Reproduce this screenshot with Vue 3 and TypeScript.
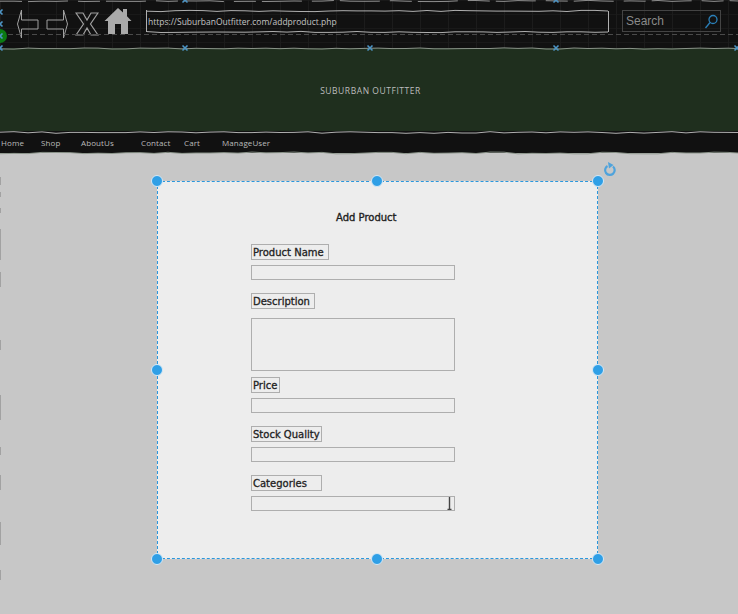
<script setup lang="ts">
import { computed } from 'vue'

const fields = [
  { label: 'Product Name', width: 78, kind: 'input' },
  { label: 'Description', width: 64, kind: 'textarea' },
  { label: 'Price', width: 29, kind: 'input' },
  { label: 'Stock Quality', width: 71, kind: 'input' },
  { label: 'Categories', width: 71, kind: 'select' }
]

const navItems = [
  { label: 'Home', width: 40 },
  { label: 'Shop', width: 40 },
  { label: 'AboutUs', width: 60 },
  { label: 'Contact', width: 43 },
  { label: 'Cart', width: 38 },
  { label: 'ManageUser', width: 70 }
]

// selection handles round the card
const handles = [
  { x: 0, y: 0 }, { x: 49.9, y: 0 }, { x: 100, y: 0 },
  { x: 0, y: 50 }, { x: 100, y: 50 },
  { x: 0, y: 100 }, { x: 49.9, y: 100 }, { x: 100, y: 100 }
]

const headerMarks = [
  [185, 0], [556, 0], [0, 12], [0, 24], [0, 36],
  [0, 48], [185, 48], [370, 48], [556, 48], [737, 48]
]

const markPath = computed(() =>
  headerMarks.map(([x, y]) => `M${x - 2.5} ${y - 2.5} L${x + 2.5} ${y + 2.5} M${x + 2.5} ${y - 2.5} L${x - 2.5} ${y + 2.5}`).join(' ')
)

// hand-drawn looking line: small seeded wobble
const wobble = (x0: number, x1: number, y: number, amp: number, seed: number) => {
  let s = seed
  const pts: string[] = []
  for (let x = x0; x < x1; x += 14) {
    s = (s * 9301 + 49297) % 233280
    pts.push(`${x},${(y + (s / 233280 - 0.5) * amp * 2).toFixed(1)}`)
  }
  pts.push(`${x1},${y}`)
  return `M${pts.join(' L')}`
}

const urlTop = computed(() => wobble(147, 608, 11, 0.7, 11))
const urlBottom = computed(() => wobble(147, 608, 32, 0.6, 23))
const topEdge = computed(() => wobble(0, 738, 1, 0.6, 37))
const bannerTop = computed(() => wobble(0, 738, 48.5, 0.6, 41))
const bannerBottom = computed(() => wobble(0, 738, 132.5, 0.8, 53))
const navBottom = computed(() => wobble(0, 738, 153, 0.9, 67))
</script>

<template>
  <div class="page">
    <header class="toolbar">
      <div class="icons">
        <svg width="23" height="30" viewBox="0 0 23 30" class="arrow">
          <path d="M4.500 1 L0.500 15 L4.500 29 L4.500 20 L21 20 L21 11 L4.500 11 Z" />
        </svg>
        <svg width="23" height="30" viewBox="0 0 23 30" class="arrow right-arrow">
          <path d="M18.500 1 L22.500 15 L18.500 29 L18.500 20 L2 20 L2 11 L18.500 11 Z" />
        </svg>
        <svg width="24" height="24" viewBox="0 0 24 24" class="cross">
          <path d="M1 1 H8 L12 8 L16 1 H23 L15.500 12 L23 23 H16 L12 16 L8 23 H1 L8.500 12 Z" />
        </svg>
        <svg width="28" height="28" viewBox="0 0 28 28" class="home">
          <path d="M14 1 L19 5.500 V2 H23 V9.200 L27.500 14 H24 V27 H17 V17 H11 V27 H4 V14 H0.500 Z" />
        </svg>
      </div>
      <div class="url">https://SuburbanOutfitter.com/addproduct.php</div>
      <div class="search">
        <span>Search</span>
        <svg width="14" height="15" viewBox="0 0 14 15">
          <circle cx="9" cy="5.500" r="4" />
          <path d="M6 8.500 L1.500 14" />
        </svg>
      </div>
    </header>

    <section class="banner">SUBURBAN OUTFITTER</section>

    <nav class="nav">
      <a v-for="item in navItems" :key="item.label" :style="{ width: `${item.width}px` }">{{ item.label }}</a>
    </nav>

    <main class="canvas">
      <div class="card">
        <h1 class="title">Add Product</h1>
        <form class="form" @submit.prevent>
          <div v-for="field in fields" :key="field.label" class="field" :class="`field-${field.kind}`">
            <label :style="{ width: `${field.width}px` }">{{ field.label }}</label>
            <textarea v-if="field.kind === 'textarea'" />
            <div v-else-if="field.kind === 'select'" class="select-wrap">
              <select />
              <svg width="7" height="13" viewBox="0 0 7 13">
                <path d="M3.500 0 V12.500 M1.500 12.500 H5.500" />
              </svg>
            </div>
            <input v-else type="text" />
          </div>
        </form>

        <div class="handles">
          <span
            v-for="h in handles"
            :key="`${h.x}-${h.y}`"
            class="handle"
            :style="{ left: `${h.x}%`, top: `${h.y}%` }"
          />
        </div>
        <svg class="rotate" width="14" height="16" viewBox="0 0 14 16">
          <path d="M4.500 4 A4.800 4.800 0 1 0 10 4.500" />
          <path class="tip" d="M5 0 L10.500 3 L6 6.500 Z" />
        </svg>
      </div>
    </main>

    <!-- sketchy lines and artboard marks over the page -->
    <svg class="sketch" width="738" height="614" viewBox="0 0 738 614">
      <path :d="topEdge" class="line dashed" />
      <path :d="urlTop" class="line" />
      <path :d="urlBottom" class="line" />
      <path d="M146.500 10 V32 M608.500 11 V32" class="line" />
      <path :d="bannerTop" class="line soft" />
      <path :d="bannerBottom" class="line" />
      <path :d="navBottom" class="line soft" />
      <path d="M0 34.500 H738" class="guide" />
      <path
        d="M0 177 V185 M0 192 V197 M0 208 V213 M0 229 V260 M0 272 V287 M0 340 V350 M0 395 V420 M0 447 V455 M0 475 V490 M0 522 V545 M0 570 V580"
        class="edge"
      />
      <circle cx="0" cy="36" r="7" class="green-dot" />
      <path :d="markPath" class="marks" />
    </svg>
  </div>
</template>

<style>
html,
body {
  margin: 0;
  background: #c7c7c7;
}
</style>

<style scoped>
.page {
  position: relative;
  width: 738px;
  height: 614px;
  overflow: hidden;
  display: flex;
  flex-direction: column;
  background: #c7c7c7;
  font-family: "DejaVu Sans", sans-serif;
}

.toolbar {
  height: 48px;
  box-sizing: border-box;
  padding: 8px 17px 0;
  display: flex;
  align-items: flex-start;
  background-color: #111;
  background-image:
    linear-gradient(to right, #1c1c1c 1px, transparent 1px),
    linear-gradient(to bottom, #191919 1px, transparent 1px);
  background-size: 28px 28px, 14px 14px;
}

.icons {
  display: flex;
  align-items: flex-start;
  width: 129px;
}

.arrow {
  margin-top: 1px;
  fill: none;
  stroke: #a0a0a0;
  stroke-width: 1;
}

.right-arrow {
  margin-left: 5px;
}

.cross {
  margin: 4px 0 0 7px;
  fill: none;
  stroke: #a0a0a0;
  stroke-width: 1.2;
}

.home {
  margin: -1px 0 0 5px;
  fill: #aaa;
}

.url {
  width: 462px;
  height: 22px;
  margin-top: 2px;
  padding-left: 2px;
  box-sizing: border-box;
  font-family: "Open Sans", sans-serif;
  font-size: 8.500px;
  line-height: 23px;
  color: #c4c4c4;
}

.search {
  width: 99px;
  height: 22px;
  margin: 2px 0 0 14px;
  padding: 0 2px 0 3px;
  box-sizing: border-box;
  display: flex;
  align-items: center;
  justify-content: space-between;
  border: 1px solid #444;
  font-family: "Liberation Sans", sans-serif;
  font-size: 12px;
  color: #8a8a8a;
}

.search svg {
  fill: none;
  stroke: #2a7fb8;
  stroke-width: 1.3;
}

.banner {
  height: 83px;
  display: flex;
  align-items: center;
  justify-content: center;
  padding: 2px 0 0 3px;
  box-sizing: border-box;
  background: #1f2f1e;
  font-family: "Open Sans", sans-serif;
  font-size: 8.500px;
  letter-spacing: 0.55px;
  color: #bdbdbd;
}

.nav {
  height: 22px;
  padding-left: 1px;
  display: flex;
  align-items: center;
  background: #111;
  font-family: "Open Sans", sans-serif;
  font-size: 8px;
  letter-spacing: 0.1px;
  color: #bbb;
}

.nav a {
  display: block;
}

.canvas {
  flex: 1;
  padding: 28px 0 0 157px;
}

.card {
  position: relative;
  width: 441px;
  height: 378px;
  box-sizing: border-box;
  border: 1px dashed #2a97dd;
  background: #ededed;
}

.title {
  margin: 29px 0 0 178px;
  font-size: 10px;
  line-height: 14px;
  font-weight: 400;
  color: #1d1d1d;
  -webkit-text-stroke: 0.35px #1d1d1d;
}

.form {
  margin: 19px 0 0 93px;
  width: 204px;
  display: flex;
  flex-direction: column;
  gap: 13px;
}

.field {
  display: flex;
  flex-direction: column;
  gap: 5px;
}

.field-textarea {
  gap: 9px;
  margin-bottom: -7px;
}

.field label {
  height: 16px;
  box-sizing: border-box;
  padding-left: 1px;
  border: 1px solid #aeaeae;
  font-size: 10px;
  line-height: 15px;
  white-space: nowrap;
  color: #222;
  -webkit-text-stroke: 0.3px #222;
}

.field input,
.field textarea,
.field select {
  display: block;
  width: 204px;
  margin: 0;
  padding: 0;
  box-sizing: border-box;
  border: 1px solid #aeaeae;
  border-radius: 0;
  background: #ededed;
  outline: none;
  appearance: none;
  resize: none;
}

.field input,
.field select {
  height: 15px;
}

.field textarea {
  height: 53px;
}

.select-wrap {
  position: relative;
}

.select-wrap svg {
  position: absolute;
  right: 2px;
  top: 1px;
  fill: none;
  stroke: #444;
  stroke-width: 1.400;
}

.handles {
  position: absolute;
  inset: -1px;
  pointer-events: none;
}

.handle {
  position: absolute;
  width: 10px;
  height: 10px;
  margin: -6px 0 0 -6px;
  border: 1px solid #d6e9f6;
  border-radius: 50%;
  background: #2f9fe6;
}

.rotate {
  position: absolute;
  left: 445px;
  top: -20px;
  fill: none;
  stroke: #4fa3dc;
  stroke-width: 2.2;
}

.rotate .tip {
  fill: #4fa3dc;
  stroke: none;
}

.sketch {
  position: absolute;
  left: 0;
  top: 0;
  pointer-events: none;
}

.line {
  fill: none;
  stroke: #b0b0b0;
  stroke-width: 1;
}

.line.dashed {
  stroke-dasharray: 22 6 40 10;
  stroke: #8f8f8f;
}

.line.soft {
  stroke: #8b948a;
}

.guide {
  stroke: #4a4a4a;
  stroke-dasharray: 5 3;
}

.edge {
  stroke: #8a8a8a;
  stroke-width: 2;
  opacity: 0.6;
}

.green-dot {
  fill: #0b7a12;
}

.marks {
  fill: none;
  stroke: #4d94c4;
  stroke-width: 1.6;
}
</style>
